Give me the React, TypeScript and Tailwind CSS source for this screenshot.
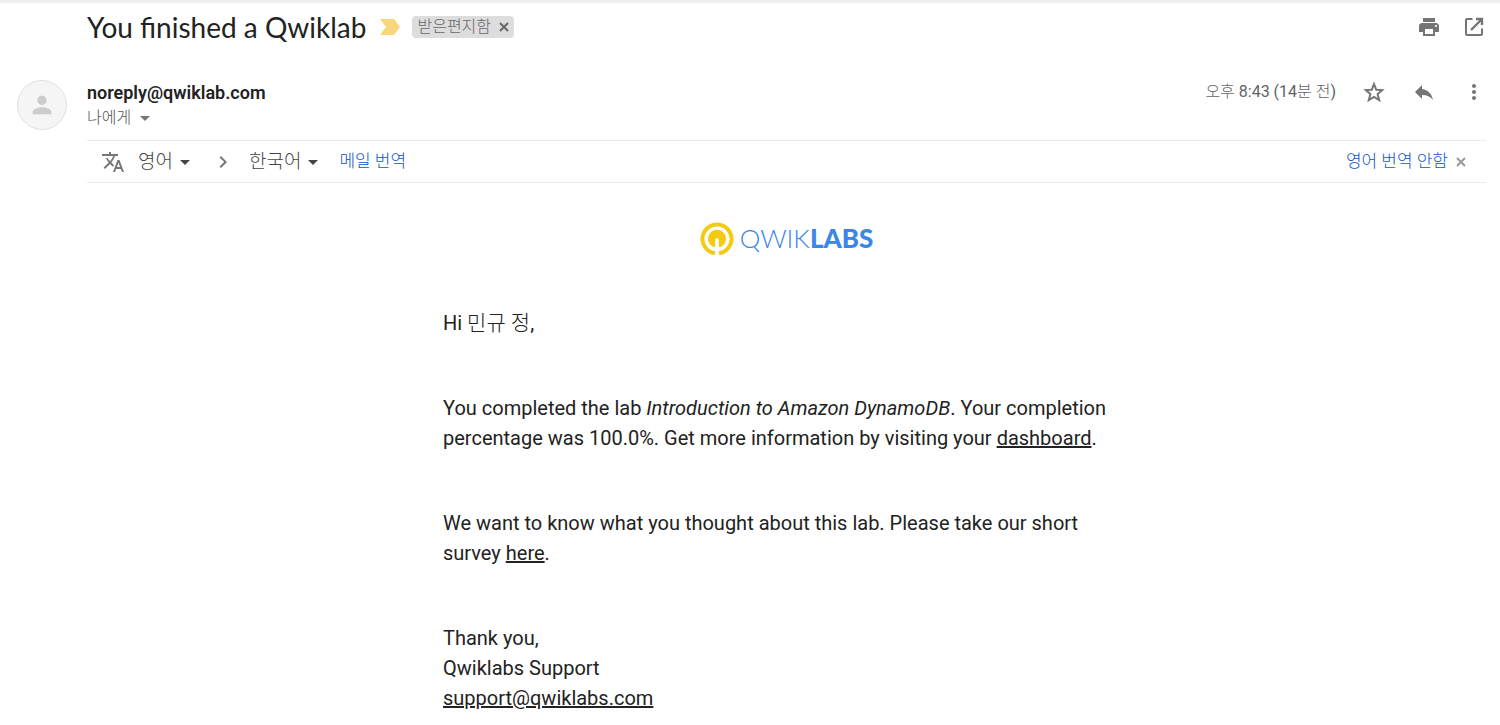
import React from 'react';
import {
  MdArrowDropDown,
  MdChevronRight,
  MdMoreVert,
  MdPerson,
  MdPrint,
  MdReply,
  MdTranslate,
} from 'react-icons/md';

type IconButtonProps = {
  label: string;
  children: React.ReactNode;
};

function IconButton({ label, children }: IconButtonProps) {
  return (
    <button type="button" aria-label={label} className="flex size-6 items-center justify-center text-[#757575]">
      {children}
    </button>
  );
}

function CloseIcon() {
  return (
    <svg width="10" height="10" viewBox="0 0 10 10" stroke="currentColor" strokeWidth="2" aria-hidden="true">
      <path d="M1 1 L9 9 M9 1 L1 9" />
    </svg>
  );
}

function StarIcon() {
  return (
    <svg width="24" height="24" viewBox="0 0 24 24" fill="none" stroke="currentColor" strokeWidth="2" aria-hidden="true">
      <path d="M12 4 L14.200 9.700 L20.200 10.100 L15.600 14 L17.200 20 L12 16.800 L6.800 20 L8.400 14 L3.800 10.100 L9.800 9.700 Z" />
    </svg>
  );
}

function NewWindowIcon() {
  return (
    <svg width="24" height="24" viewBox="0 0 24 24" fill="none" stroke="currentColor" strokeWidth="2" aria-hidden="true">
      <path d="M10.500 4 H5 Q4 4 4 5 V19 Q4 20 5 20 H19 Q20 20 20 19 V13.500" />
      <path d="M14 4 H20 V10 M20 4 L9 15" strokeWidth="2.400" />
    </svg>
  );
}

type LanguageSelectProps = {
  label: string;
  value: string;
};

function LanguageSelect({ label, value }: LanguageSelectProps) {
  return (
    <label className="flex items-center text-[#444444]">
      <select
        aria-label={label}
        defaultValue={value}
        className="field-sizing-content appearance-none text-[19px] leading-6 font-light outline-none"
      >
        <option>영어</option>
        <option>한국어</option>
      </select>
      <MdArrowDropDown size={24} />
    </label>
  );
}

function QwiklabsLogo() {
  return (
    <div className="flex items-start justify-center gap-[6px]">
      <svg width="34" height="34" viewBox="0 0 34 34" fill="none" aria-hidden="true">
        <path d="M15 31.300 A14.500 14.500 0 1 1 19 31.300" stroke="#f4cb13" strokeWidth="4" />
        <path
          d="M13.500 25 A9 9 0 1 1 20.500 25 L18.800 25 V18 Q18.800 16.200 17 16.200 Q15.200 16.200 15.200 18 V25 Z"
          fill="#f4cb13"
        />
      </svg>
      <span className="font-[Lato] text-[26px] leading-8 text-[#3b86e8]">
        <span className="font-light">QWIK</span>
        <span className="font-black">LABS</span>
      </span>
    </div>
  );
}

export default function App() {
  return (
    <main className="border-t-3 border-[#eeeeee] bg-white pr-[14px] pb-3 pl-[17px] font-[Roboto,'Noto_Sans_CJK_KR',sans-serif] text-[#222222]">
      <header className="flex h-12 items-center pl-[70px]">
        <h1 className="font-[Lato,sans-serif] text-[28px] leading-9">You finished a Qwiklab</h1>
        <svg width="20" height="16" viewBox="0 0 20 16" className="ml-[14px]" aria-hidden="true">
          <path d="M0 0 H14 L20 8 L14 16 H0 L6 8 Z" fill="#f9d67a" />
        </svg>
        <div className="ml-3 flex h-[22px] items-center gap-2 rounded bg-[#dddddd] px-[5px] text-[#666666]">
          <span className="text-base leading-5 font-light">받은편지함</span>
          <button type="button" aria-label="라벨 삭제">
            <CloseIcon />
          </button>
        </div>
        <div className="ml-auto flex gap-[21px]">
          <IconButton label="모두 인쇄">
            <MdPrint size={24} />
          </IconButton>
          <IconButton label="새 창에서 열기">
            <NewWindowIcon />
          </IconButton>
        </div>
      </header>

      <section className="flex h-[89px] items-start gap-5 pt-[29px]">
        <div className="flex size-[50px] items-center justify-center rounded-full border border-[#e0e0e0] bg-[#f5f5f5] text-[#cccccc]">
          <MdPerson size={28} />
        </div>
        <div>
          <h2 className="text-lg leading-[26px] font-semibold">noreply@qwiklab.com</h2>
          <button type="button" className="flex h-6 items-center gap-[2px] text-base font-light text-[#555555]">
            나에게
            <MdArrowDropDown size={24} className="text-[#757575]" />
          </button>
        </div>
        <div className="ml-auto flex items-center">
          <time className="mr-[26px] text-base leading-6 text-[#5f6368]">
            <span className="font-light">오후</span> 8:43 (14<span className="font-light">분 전</span>)
          </time>
          <div className="flex gap-[26px]">
            <IconButton label="별표">
              <StarIcon />
            </IconButton>
            <IconButton label="답장">
              <MdReply size={24} />
            </IconButton>
            <IconButton label="더보기">
              <MdMoreVert size={24} />
            </IconButton>
          </div>
        </div>
      </section>

      <div className="ml-[70px]">
        <div className="flex h-[43px] items-center border-y border-[#e8eaed] pr-5 pl-[14px]">
          <MdTranslate size={24} className="mr-[13px] text-[#777777]" />
          <LanguageSelect label="원본 언어" value="영어" />
          <MdChevronRight size={24} className="mx-[14px] text-[#777777]" />
          <LanguageSelect label="번역 언어" value="한국어" />
          <a href="#translate" className="ml-[14px] text-[17px] font-light text-[#1155cc]">
            메일 번역
          </a>
          <a href="#never" className="ml-auto text-[17px] font-light text-[#1155cc]">
            영어 번역 안함
          </a>
          <button type="button" aria-label="닫기" className="ml-2 text-[#999999]">
            <CloseIcon />
          </button>
        </div>

        <article className="mx-auto max-w-[687px] pt-[39px] text-xl leading-[30px]">
          <QwiklabsLogo />
          <div className="flex flex-col gap-[55px] pt-[52px]">
            <p>
              Hi <span className="text-[21px] font-light">민규 정</span>,
            </p>
            <p>
              You completed the lab <em>Introduction to Amazon DynamoDB</em>. Your completion percentage was 100.0%. Get
              more information by visiting your{' '}
              <a href="#dashboard" className="underline">
                dashboard
              </a>
              .
            </p>
            <p>
              We want to know what you thought about this lab. Please take our short survey{' '}
              <a href="#survey" className="underline">
                here
              </a>
              .
            </p>
            <p>
              Thank you,
              <br />
              Qwiklabs Support
              <br />
              <a href="mailto:support@qwiklabs.com" className="underline">
                support@qwiklabs.com
              </a>
            </p>
          </div>
        </article>
      </div>
    </main>
  );
}
